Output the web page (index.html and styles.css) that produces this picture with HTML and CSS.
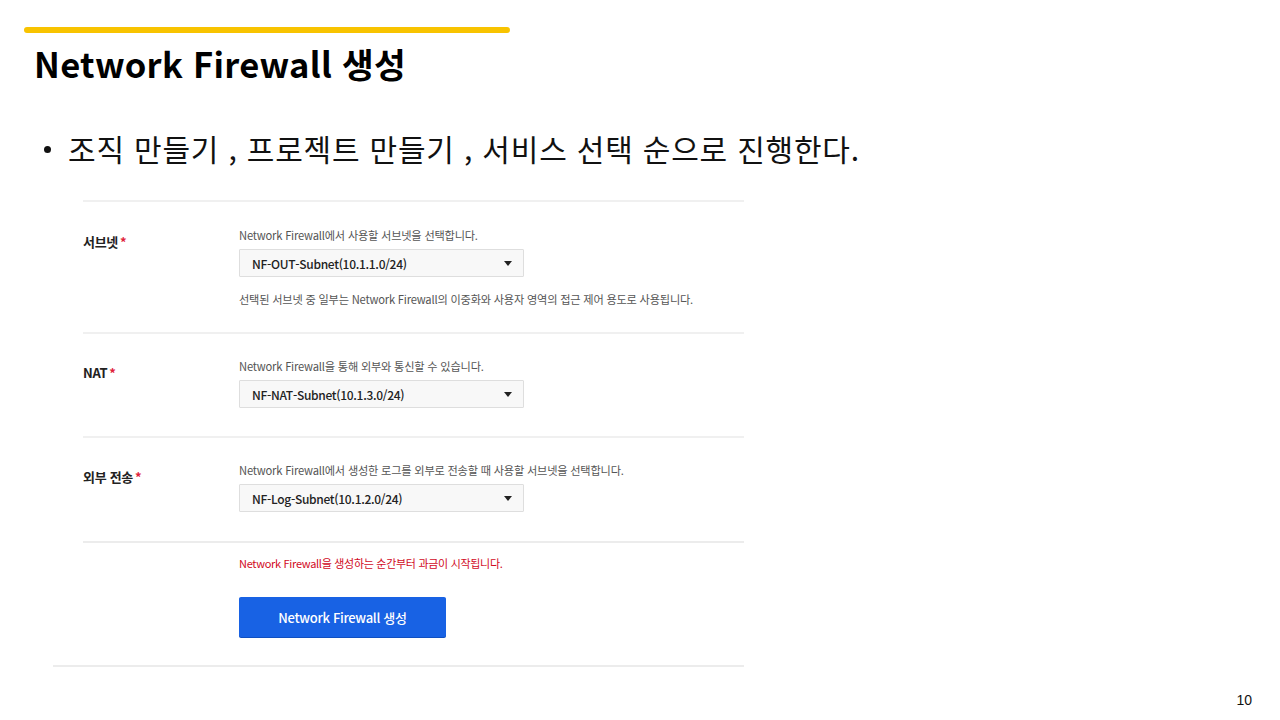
FILE: index.html
```html
<!DOCTYPE html>
<html lang="ko">
<head>
<meta charset="utf-8">
<title>Network Firewall 생성</title>
<link rel="stylesheet" href="styles.css">
</head>
<body>
<div class="slide">
  <div class="accent"></div>
  <h1 class="title">Network Firewall 생성</h1>
  <ul class="bullets">
    <li>조직 만들기 , 프로젝트 만들기 , 서비스 선택 순으로 진행한다.</li>
  </ul>
  <div class="shot">
    <div class="row row-first">
      <div class="label">서브넷<span class="req">*</span></div>
      <div class="field">
        <div class="desc">Network Firewall에서 사용할 서브넷을 선택합니다.</div>
        <div class="select"><span>NF-OUT-Subnet(10.1.1.0/24)</span><span class="caret"></span></div>
        <div class="help">선택된 서브넷 중 일부는 Network Firewall의 이중화와 사용자 영역의 접근 제어 용도로 사용됩니다.</div>
      </div>
    </div>
    <div class="row row-nat">
      <div class="label">NAT<span class="req">*</span></div>
      <div class="field">
        <div class="desc">Network Firewall을 통해 외부와 통신할 수 있습니다.</div>
        <div class="select"><span>NF-NAT-Subnet(10.1.3.0/24)</span><span class="caret"></span></div>
      </div>
    </div>
    <div class="row row-log">
      <div class="label">외부 전송<span class="req">*</span></div>
      <div class="field">
        <div class="desc">Network Firewall에서 생성한 로그를 외부로 전송할 때 사용할 서브넷을 선택합니다.</div>
        <div class="select"><span>NF-Log-Subnet(10.1.2.0/24)</span><span class="caret"></span></div>
      </div>
    </div>
    <div class="row row-submit">
      <div class="label"></div>
      <div class="field">
        <div class="warn">Network Firewall을 생성하는 순간부터 과금이 시작됩니다.</div>
        <button class="btn" type="button">Network Firewall 생성</button>
      </div>
    </div>
  </div>
  <div class="page-num">10</div>
</div>
</body>
</html>
```

FILE: styles.css
```css
* { box-sizing: border-box; }
html, body { margin: 0; padding: 0; background: #ffffff; }
body { font-family: "Noto Sans CJK KR", "Noto Sans", sans-serif; color: #000; }

.slide {
  width: 1280px;
  height: 720px;
  display: flex;
  flex-direction: column;
  padding-top: 27px;
  overflow: hidden;
}

.accent {
  margin-left: 24px;
  width: 486px;
  height: 6px;
  border-radius: 3px;
  background: #f8c300;
}

.title {
  margin: 6px 0 0 34px;
  font-size: 34.5px;
  line-height: 48px;
  font-weight: 700;
  letter-spacing: 0.3px;
  color: #000;
}

.bullets {
  list-style: none;
  margin: 39px 0 0 0;
  padding: 0 0 0 44px;
}
.bullets li {
  position: relative;
  padding-left: 24px;
  font-size: 30px;
  line-height: 44px;
  letter-spacing: 0.8px;
  color: #111;
}
.bullets li::before {
  content: "";
  position: absolute;
  left: 0;
  top: 20px;
  width: 7px;
  height: 7px;
  border-radius: 50%;
  background: #111;
}

.shot {
  margin: 30px 0 0 53px;
  width: 691px;
  border-bottom: 2px solid #ececec;
}

.row {
  margin-left: 30px;
  display: grid;
  grid-template-columns: 156px 1fr;
  border-top: 2px solid #f0f0f0;
}
.row-first { padding: 25px 0 25px; }
.row-nat { padding: 24px 0 28px; }
.row-log { padding: 24px 0 29px; }
.row-submit { padding: 14px 0 28px; margin-left: 0; padding-left: 30px; border-top: 0; position: relative; }
.row-submit::before {
  content: "";
  position: absolute;
  left: 30px; right: 0; top: 0;
  border-top: 2px solid #ececec;
}

.label {
  padding-top: 7px;
  font-size: 13px;
  line-height: 16px;
  font-weight: 700;
  color: #222;
  letter-spacing: -0.3px;
}
.req { color: #e0243a; margin-left: 2px; }

.field { display: flex; flex-direction: column; align-items: flex-start; }

.desc, .help {
  font-size: 11.2px;
  line-height: 16px;
  color: #555;
  letter-spacing: -0.2px;
}
.help { margin-top: 14px; }

.select {
  margin-top: 6px;
  width: 285px;
  height: 28px;
  padding: 0 11px 0 12px;
  display: flex;
  align-items: center;
  justify-content: space-between;
  background: #f8f8f8;
  border: 1px solid #dedede;
  border-radius: 1px;
  font-size: 12px;
  color: #222;
  font-weight: 500;
  letter-spacing: -0.3px;
}
.caret {
  width: 0; height: 0;
  border-left: 4px solid transparent;
  border-right: 4px solid transparent;
  border-top: 5px solid #222;
}

.warn {
  font-size: 11px;
  line-height: 16px;
  color: #d10a1e;
  letter-spacing: -0.3px;
}

.btn {
  margin-top: 26px;
  width: 207px;
  height: 40px;
  border: 0;
  border-radius: 2px;
  background: #1862e4;
  color: #fff;
  font-family: "Noto Sans CJK KR", "Noto Sans", sans-serif;
  font-size: 13px;
  font-weight: 500;
  letter-spacing: -0.3px;
  box-shadow: 0 1px 0 #0f4fc0;
}

.page-num {
  margin-top: auto;
  align-self: flex-end;
  margin-right: 28px;
  margin-bottom: 12px;
  font-family: "Liberation Sans", Arial, sans-serif;
  font-size: 14px;
  line-height: 16px;
  color: #111;
}
```
